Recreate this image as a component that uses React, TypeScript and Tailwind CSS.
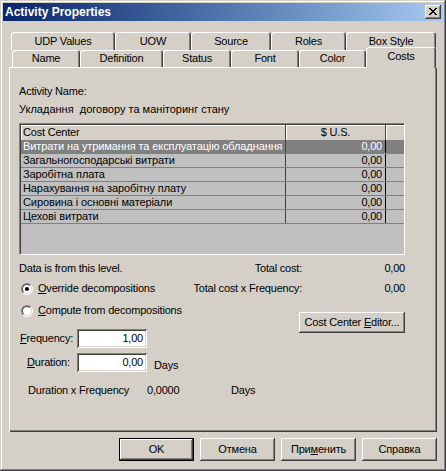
import React from 'react';

// Classic Windows 2000 style property sheet, "Costs" page

const RAISED =
  'bg-[#d4d0c8] shadow-[inset_-1px_-1px_#404040,inset_1px_1px_#ffffff,inset_-2px_-2px_#808080]';
const SUNKEN =
  'bg-white shadow-[inset_1px_1px_#808080,inset_-1px_-1px_#ffffff,inset_2px_2px_#404040,inset_-2px_-2px_#d4d0c8]';

const BACK_TABS = [
  { label: 'UDP Values', w: 'w-[104px]' },
  { label: 'UOW', w: 'w-[76px]' },
  { label: 'Source', w: 'w-[80px]' },
  { label: 'Roles', w: 'w-[75px]' },
  { label: 'Box Style', w: 'w-[90px]' },
];

const FRONT_TABS = [
  { label: 'Name', w: 'w-[68px]' },
  { label: 'Definition', w: 'w-[83px]' },
  { label: 'Status', w: 'w-[68px]' },
  { label: 'Font', w: 'w-[68px]' },
  { label: 'Color', w: 'w-[67px]' },
];

const COST_CENTERS = [
  'Витрати на утримання та експлуатацію обладнання',
  'Загальногосподарські витрати',
  'Заробітна плата',
  'Нарахування на заробітну плату',
  'Сировина і основні матеріали',
  'Цехові витрати',
];

function Tab({ label, w }: { label: string; w: string }) {
  return (
    <div
      className={`${w} h-full flex items-center justify-center rounded-t-[3px] bg-[#d4d0c8] shadow-[inset_1px_1px_#ffffff,inset_-1px_0_#404040,inset_-2px_0_#808080]`}
    >
      {label}
    </div>
  );
}

function Radio({ checked, children }: { checked?: boolean; children: React.ReactNode }) {
  return (
    <div className="flex items-center h-[13px]">
      <div className="ml-[2px] w-[12px] h-[12px] rounded-full bg-white border border-t-[#808080] border-l-[#808080] border-r-white border-b-white flex items-center justify-center">
        <div className="w-[10px] h-[10px] rounded-full border border-t-[#404040] border-l-[#404040] border-r-[#d4d0c8] border-b-[#d4d0c8] flex items-center justify-center">
          {checked && <div className="w-[4px] h-[4px] rounded-full bg-black" />}
        </div>
      </div>
      <span className="ml-[5px]">{children}</span>
    </div>
  );
}

function Button({ children, isDefault, className = '' }: { children: React.ReactNode; isDefault?: boolean; className?: string }) {
  if (isDefault) {
    return (
      <div className={`border border-black ${className}`}>
        <div className={`w-full h-full flex items-center justify-center ${RAISED}`}>{children}</div>
      </div>
    );
  }
  return <div className={`flex items-center justify-center ${RAISED} ${className}`}>{children}</div>;
}

export default function App() {
  return (
    <div className="w-[446px] h-[471px] p-[3px] bg-[#d4d0c8] text-black text-[11px] leading-[13px] tracking-[-0.2px] font-['Liberation_Sans',Arial,sans-serif] shadow-[inset_-1px_-1px_#404040,inset_1px_1px_#d4d0c8,inset_-2px_-2px_#808080,inset_2px_2px_#ffffff]">
      {/* Title bar */}
      <div className="h-[18px] flex items-center justify-between bg-linear-to-r from-[#0a246a] to-[#a6caf0] pl-[2px] pr-[2px]">
        <span className="text-white font-bold text-[12px] tracking-normal">Activity Properties</span>
        <div className={`w-[16px] h-[14px] flex items-center justify-center ${RAISED}`}>
          <svg width="8" height="7" viewBox="0 0 8 7" className="-mt-[1px] -ml-[1px]">
            <path d="M0 0h2v1h1v1h2V1h1V0h2v1H7v1H6v1H5v1h1v1h1v1h1v1H6V6H5V5H3v1H2v1H0V6h1V5h1V4h1V3H2V2H1V1H0z" fill="#000" />
          </svg>
        </div>
      </div>

      {/* Tab rows */}
      <div className="mt-[11px] ml-[8px] h-[18px] flex">
        {BACK_TABS.map((t) => (
          <Tab key={t.label} {...t} />
        ))}
      </div>
      <div className="ml-[9px] h-[17px] flex items-end relative z-10">
        {FRONT_TABS.map((t) => (
          <Tab key={t.label} {...t} />
        ))}
        <div className="w-[70px] h-[21px] -mb-[1px] flex justify-center pt-[3px] rounded-t-[3px] bg-[#d4d0c8] shadow-[inset_1px_1px_#ffffff,inset_-1px_0_#404040,inset_-2px_0_#808080]">
          Costs
        </div>
      </div>

      {/* Page */}
      <div className="ml-[6px] w-[428px] h-[365px] pt-[18px] pl-[10px] shadow-[inset_1px_1px_#ffffff,inset_-1px_-1px_#404040,inset_-2px_-2px_#808080]">
        <div>Activity Name:</div>
        <div className="mt-[5px] tracking-normal">Укладання&nbsp; договору та маніторинг стану</div>

        {/* Cost grid */}
        <div className="mt-[7px] w-[386px] h-[132px] border border-t-[#808080] border-l-[#808080] border-r-white border-b-white">
          <div className="w-full h-full border-t border-l border-[#404040] bg-[#c0c0c0] flex flex-col">
            <div className="flex h-[15px] bg-[#d4d0c8]">
              <div className="w-[265px] pl-[2px] pt-[1px] border-r border-[#404040] shadow-[inset_1px_1px_#ffffff]">Cost Center</div>
              <div className="w-[100px] pt-[1px] text-center border-r border-[#404040] shadow-[inset_1px_1px_#ffffff]">$ U.S.</div>
              <div className="flex-1 shadow-[inset_1px_1px_#ffffff]" />
            </div>
            {COST_CENTERS.map((name, i) => (
              <div
                key={name}
                className={`flex h-[14px] border-b border-[#808080] ${i === 0 ? 'bg-[#808080] text-white' : ''}`}
              >
                <div className="w-[265px] pl-[2px] tracking-[-0.1px] whitespace-nowrap overflow-hidden border-r border-[#404040]">{name}</div>
                <div className="w-[100px] pr-[3px] text-right border-r border-black">0,00</div>
                <div className="flex-1" />
              </div>
            ))}
          </div>
        </div>

        {/* Options and totals */}
        <div className="mt-[7px] flex">
          <div className="w-[174px]">
            <div>Data is from this level.</div>
            <div className="mt-[7px]">
              <Radio checked>
                <u>O</u>verride decompositions
              </Radio>
            </div>
            <div className="mt-[9px]">
              <Radio>
                <u>C</u>ompute from decompositions
              </Radio>
            </div>
            <div className="mt-[12px] flex items-center">
              <span className="w-[58px] pl-[1px]">
                <u>F</u>requency:
              </span>
              <div className={`w-[70px] h-[19px] pr-[4px] pt-[3px] text-right ${SUNKEN}`}>1,00</div>
            </div>
            <div className="mt-[5px] flex items-center">
              <span className="w-[58px] pl-[8px]">
                <u>D</u>uration:
              </span>
              <div className={`w-[70px] h-[19px] pr-[4px] pt-[3px] text-right ${SUNKEN}`}>0,00</div>
              <span className="ml-[7px] mt-[6px]">Days</span>
            </div>
          </div>

          <div className="w-[212px] flex flex-col">
            <div className="flex">
              <span className="w-[109px] text-right">Total cost:</span>
              <span className="flex-1 text-right">0,00</span>
            </div>
            <div className="mt-[7px] flex">
              <span className="w-[109px] text-right">Total cost x Frequency:</span>
              <span className="flex-1 text-right">0,00</span>
            </div>
            <Button className="mt-[17px] ml-auto w-[106px] h-[21px]">
              <span>
                Cost Center <u>E</u>ditor...
              </span>
            </Button>
          </div>
        </div>

        <div className="mt-[12px] flex pl-[9px]">
          <span className="w-[119px]">Duration x Frequency</span>
          <span className="w-[84px]">0,0000</span>
          <span>Days</span>
        </div>
      </div>

      {/* Dialog buttons */}
      <div className="mt-[6px] pr-[6px] flex justify-end gap-[6px]">
        <Button isDefault className="w-[75px] h-[23px]">OK</Button>
        <Button className="w-[75px] h-[23px]">Отмена</Button>
        <Button className="w-[75px] h-[23px]">
          <span>
            При<u>м</u>енить
          </span>
        </Button>
        <Button className="w-[75px] h-[23px]">Справка</Button>
      </div>
    </div>
  );
}
